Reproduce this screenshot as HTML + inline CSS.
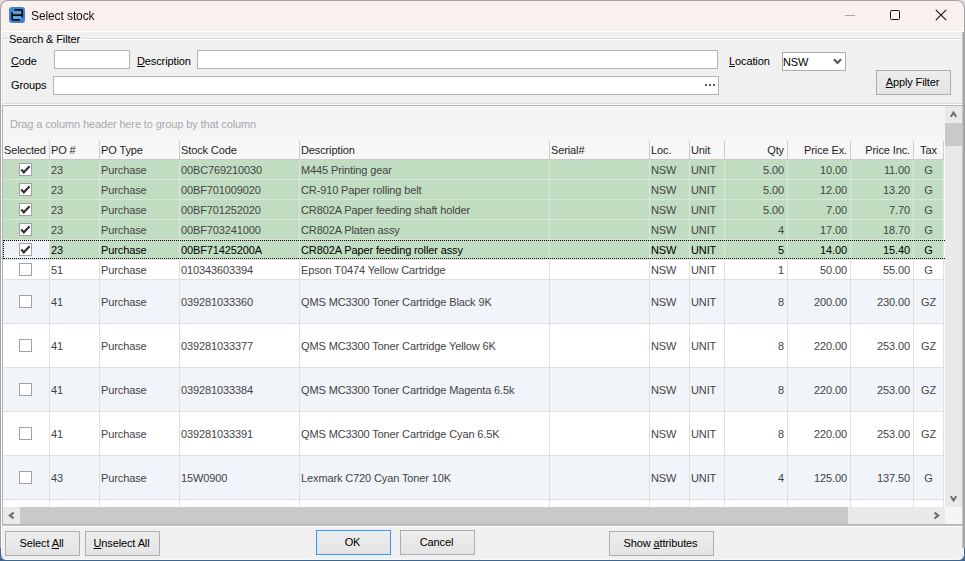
<!DOCTYPE html>
<html><head><meta charset="utf-8"><title>Select stock</title>
<style>
*{box-sizing:border-box;margin:0;padding:0}
html,body{width:965px;height:561px;overflow:hidden}
body{position:relative;background:#d9d9d9;font-family:"Liberation Sans",sans-serif;font-size:11px;letter-spacing:-0.12px;color:#000}
.a{position:absolute}
.t{position:absolute;white-space:nowrap;line-height:14px}
.win{position:absolute;left:0;top:0;width:965px;height:560px;border-radius:8px 8px 7px 7px;background:#f0f0f0;overflow:hidden}
.frame{position:absolute;left:0;top:0;width:965px;height:560px;border:1px solid #a3a3a3;border-bottom-color:#f7f7f7;border-radius:8px 8px 7px 7px}
.tb{position:absolute;background:#fff;border:1px solid #b4b4b4}
.btn{position:absolute;background:linear-gradient(#ededed,#e4e4e4);padding-right:2px;border:1px solid #adadad;text-align:center;color:#000;font-size:11px;line-height:23px;white-space:nowrap}
u{text-decoration:underline;text-decoration-thickness:1px;text-underline-offset:1px}
.cell{position:absolute;white-space:nowrap;line-height:19px}
</style></head><body>

<div class="a" style="left:0px;top:0px;width:965px;height:548px;background:#dedede"></div>
<div class="a" style="left:0px;top:548px;width:965px;height:13px;background:#3c6894"></div>
<div class="win">
<div class="a" style="left:0px;top:0px;width:965px;height:31px;background:#f9f0ef"></div>
<div class="a" style="left:0px;top:31px;width:965px;height:1px;background:#ffffff"></div>
<svg class="a" style="left:9px;top:7px" width="16" height="16" viewBox="0 0 16 16">
<rect x="0" y="0" width="16" height="16" rx="3" fill="#3e86d0"/>
<rect x="4" y="4.4" width="8.6" height="3" fill="#5aa2e6"/>
<rect x="4" y="9" width="8.6" height="3" fill="#5aa2e6"/>
<path d="M5.4 2.9H12.2Q13.2 2.9 13.2 3.9V10.6M2.2 8.2H14M3.1 5.3V11.8Q3.1 12.8 4.1 12.8H11" stroke="#0d0d0d" stroke-width="1.7" fill="none"/>
</svg>
<div class="t" style="left:31px;top:8px;font-size:12px;line-height:16px;letter-spacing:-0.1px;will-change:transform;color:#111">Select stock</div>
<div class="a" style="left:845px;top:15px;width:10px;height:1px;background:#a8a8a8"></div>
<div class="a" style="left:890px;top:10px;width:10px;height:10px;border:1px solid #111;border-radius:1.5px"></div>
<svg class="a" style="left:935px;top:9px" width="12" height="12" viewBox="0 0 12 12"><path d="M0.8 0.8L11.2 11.2M11.2 0.8L0.8 11.2" stroke="#111" stroke-width="1.1"/></svg>
<div class="a" style="left:1px;top:32px;width:1px;height:526px;background:#ffffff"></div>
<div class="a" style="left:2px;top:38px;width:962px;height:66px;border:1px solid #dcdcdc;border-right:none"></div>
<div class="a" style="left:3px;top:39px;width:960px;height:66px;border:1px solid #ffffff;border-top:none;border-left:none"></div>
<div class="a" style="left:3px;top:39px;width:1px;height:64px;background:#fff"></div>
<div class="a" style="left:3px;top:39px;width:958px;height:1px;background:#fff"></div>
<div class="t" style="left:8px;top:32px;padding:0 1px;background:#f0f0f0">Search &amp; Filter</div>
<div class="t" style="left:11px;top:54px;"><u>C</u>ode</div>
<div class="a" style="left:54px;top:50px;width:76px;height:19px;background:#fff;border:1px solid #b4b4b4"></div>
<div class="t" style="left:137px;top:54px;"><u>D</u>escription</div>
<div class="a" style="left:197px;top:50px;width:521px;height:19px;background:#fff;border:1px solid #b4b4b4"></div>
<div class="t" style="left:11px;top:78px;">Groups</div>
<div class="a" style="left:53px;top:76px;width:666px;height:19px;background:#fff;border:1px solid #b4b4b4"></div>
<div class="a" style="left:705px;top:84px;width:2px;height:2px;background:#555"></div>
<div class="a" style="left:709px;top:84px;width:2px;height:2px;background:#555"></div>
<div class="a" style="left:713px;top:84px;width:2px;height:2px;background:#555"></div>
<div class="t" style="left:729px;top:54px;"><u>L</u>ocation</div>
<div class="a" style="left:782px;top:52px;width:64px;height:19px;background:#fff;border:1px solid #adadad"></div>
<div class="t" style="left:783px;top:55px;">NSW</div>
<svg class="a" style="left:833px;top:58px" width="9" height="7" viewBox="0 0 9 7"><path d="M1 1.2L4.5 5L8 1.2" stroke="#555" stroke-width="2" fill="none"/></svg>
<div class="btn" style="left:876px;top:70px;width:75px;height:25px"><u>A</u>pply Filter</div>
<div class="a" style="left:2px;top:105px;width:961px;height:420px;border:1px solid #b4b4b4;border-right-color:#f0f0f0;background:#fff"></div>
<div class="a" style="left:3px;top:106px;width:942px;height:35px;background:#f5f5f5"></div>
<div class="t" style="left:10px;top:117px;color:#a8a8ac">Drag a column header here to group by that column</div>
<div class="a" style="left:3px;top:141px;width:941px;height:18px;background:#f7f7f7"></div>
<div class="a" style="left:3px;top:159px;width:941px;height:1px;background:#c9c9c9"></div>
<div class="a" style="left:49px;top:141px;width:1px;height:18px;background:#cdcdcd"></div>
<div class="a" style="left:99px;top:141px;width:1px;height:18px;background:#cdcdcd"></div>
<div class="a" style="left:179px;top:141px;width:1px;height:18px;background:#cdcdcd"></div>
<div class="a" style="left:299px;top:141px;width:1px;height:18px;background:#cdcdcd"></div>
<div class="a" style="left:549px;top:141px;width:1px;height:18px;background:#cdcdcd"></div>
<div class="a" style="left:649px;top:141px;width:1px;height:18px;background:#cdcdcd"></div>
<div class="a" style="left:689px;top:141px;width:1px;height:18px;background:#cdcdcd"></div>
<div class="a" style="left:724px;top:141px;width:1px;height:18px;background:#cdcdcd"></div>
<div class="a" style="left:787px;top:141px;width:1px;height:18px;background:#cdcdcd"></div>
<div class="a" style="left:850px;top:141px;width:1px;height:18px;background:#cdcdcd"></div>
<div class="a" style="left:913px;top:141px;width:1px;height:18px;background:#cdcdcd"></div>
<div class="a" style="left:943px;top:141px;width:1px;height:18px;background:#cdcdcd"></div>
<div class="t" style="left:4px;top:143px;color:#1e1e1e">Selected</div>
<div class="t" style="left:51px;top:143px;color:#1e1e1e">PO #</div>
<div class="t" style="left:101px;top:143px;color:#1e1e1e">PO Type</div>
<div class="t" style="left:181px;top:143px;color:#1e1e1e">Stock Code</div>
<div class="t" style="left:301px;top:143px;color:#1e1e1e">Description</div>
<div class="t" style="left:551px;top:143px;color:#1e1e1e">Serial#</div>
<div class="t" style="left:651px;top:143px;color:#1e1e1e">Loc.</div>
<div class="t" style="left:691px;top:143px;color:#1e1e1e">Unit</div>
<div class="t" style="left:725px;top:143px;width:59px;text-align:right;color:#1e1e1e">Qty</div>
<div class="t" style="left:788px;top:143px;width:59px;text-align:right;color:#1e1e1e">Price Ex.</div>
<div class="t" style="left:851px;top:143px;width:59px;text-align:right;color:#1e1e1e">Price Inc.</div>
<div class="t" style="left:914px;top:143px;width:29px;text-align:center;color:#1e1e1e">Tax</div>
<div class="a" style="left:3px;top:160px;width:941px;height:19px;background:#c1ddc1"></div>
<div class="a" style="left:3px;top:179px;width:941px;height:1px;background:#dde3dd"></div>
<div class="a" style="left:49px;top:160px;width:1px;height:20px;background:#dde3dd"></div>
<div class="a" style="left:99px;top:160px;width:1px;height:20px;background:#dde3dd"></div>
<div class="a" style="left:179px;top:160px;width:1px;height:20px;background:#dde3dd"></div>
<div class="a" style="left:299px;top:160px;width:1px;height:20px;background:#dde3dd"></div>
<div class="a" style="left:549px;top:160px;width:1px;height:20px;background:#dde3dd"></div>
<div class="a" style="left:649px;top:160px;width:1px;height:20px;background:#dde3dd"></div>
<div class="a" style="left:689px;top:160px;width:1px;height:20px;background:#dde3dd"></div>
<div class="a" style="left:724px;top:160px;width:1px;height:20px;background:#dde3dd"></div>
<div class="a" style="left:787px;top:160px;width:1px;height:20px;background:#dde3dd"></div>
<div class="a" style="left:850px;top:160px;width:1px;height:20px;background:#dde3dd"></div>
<div class="a" style="left:913px;top:160px;width:1px;height:20px;background:#dde3dd"></div>
<div class="a" style="left:943px;top:160px;width:1px;height:20px;background:#dde3dd"></div>
<div class="a" style="left:19px;top:163px;width:13px;height:13px;background:#fff;border:1px solid #a2a2a2"></div>
<svg class="a" style="left:19px;top:163px" width="13" height="13" viewBox="0 0 13 13"><path d="M2.3 6.6L4.8 9.3L10.6 3.3" stroke="#333" stroke-width="2.2" fill="none"/></svg>
<div class="cell" style="left:51px;top:161px;color:#444">23</div>
<div class="cell" style="left:101px;top:161px;color:#444">Purchase</div>
<div class="cell" style="left:181px;top:161px;color:#444">00BC769210030</div>
<div class="cell" style="left:301px;top:161px;color:#444">M445 Printing gear</div>
<div class="cell" style="left:651px;top:161px;color:#444">NSW</div>
<div class="cell" style="left:691px;top:161px;color:#444">UNIT</div>
<div class="cell" style="left:725px;top:161px;width:59px;text-align:right;color:#444">5.00</div>
<div class="cell" style="left:788px;top:161px;width:59px;text-align:right;color:#444">10.00</div>
<div class="cell" style="left:851px;top:161px;width:59px;text-align:right;color:#444">11.00</div>
<div class="cell" style="left:914px;top:161px;width:29px;text-align:center;color:#444">G</div>
<div class="a" style="left:3px;top:180px;width:941px;height:19px;background:#c1ddc1"></div>
<div class="a" style="left:3px;top:199px;width:941px;height:1px;background:#dde3dd"></div>
<div class="a" style="left:49px;top:180px;width:1px;height:20px;background:#dde3dd"></div>
<div class="a" style="left:99px;top:180px;width:1px;height:20px;background:#dde3dd"></div>
<div class="a" style="left:179px;top:180px;width:1px;height:20px;background:#dde3dd"></div>
<div class="a" style="left:299px;top:180px;width:1px;height:20px;background:#dde3dd"></div>
<div class="a" style="left:549px;top:180px;width:1px;height:20px;background:#dde3dd"></div>
<div class="a" style="left:649px;top:180px;width:1px;height:20px;background:#dde3dd"></div>
<div class="a" style="left:689px;top:180px;width:1px;height:20px;background:#dde3dd"></div>
<div class="a" style="left:724px;top:180px;width:1px;height:20px;background:#dde3dd"></div>
<div class="a" style="left:787px;top:180px;width:1px;height:20px;background:#dde3dd"></div>
<div class="a" style="left:850px;top:180px;width:1px;height:20px;background:#dde3dd"></div>
<div class="a" style="left:913px;top:180px;width:1px;height:20px;background:#dde3dd"></div>
<div class="a" style="left:943px;top:180px;width:1px;height:20px;background:#dde3dd"></div>
<div class="a" style="left:19px;top:183px;width:13px;height:13px;background:#fff;border:1px solid #a2a2a2"></div>
<svg class="a" style="left:19px;top:183px" width="13" height="13" viewBox="0 0 13 13"><path d="M2.3 6.6L4.8 9.3L10.6 3.3" stroke="#333" stroke-width="2.2" fill="none"/></svg>
<div class="cell" style="left:51px;top:181px;color:#444">23</div>
<div class="cell" style="left:101px;top:181px;color:#444">Purchase</div>
<div class="cell" style="left:181px;top:181px;color:#444">00BF701009020</div>
<div class="cell" style="left:301px;top:181px;color:#444">CR-910 Paper rolling belt</div>
<div class="cell" style="left:651px;top:181px;color:#444">NSW</div>
<div class="cell" style="left:691px;top:181px;color:#444">UNIT</div>
<div class="cell" style="left:725px;top:181px;width:59px;text-align:right;color:#444">5.00</div>
<div class="cell" style="left:788px;top:181px;width:59px;text-align:right;color:#444">12.00</div>
<div class="cell" style="left:851px;top:181px;width:59px;text-align:right;color:#444">13.20</div>
<div class="cell" style="left:914px;top:181px;width:29px;text-align:center;color:#444">G</div>
<div class="a" style="left:3px;top:200px;width:941px;height:19px;background:#c1ddc1"></div>
<div class="a" style="left:3px;top:219px;width:941px;height:1px;background:#dde3dd"></div>
<div class="a" style="left:49px;top:200px;width:1px;height:20px;background:#dde3dd"></div>
<div class="a" style="left:99px;top:200px;width:1px;height:20px;background:#dde3dd"></div>
<div class="a" style="left:179px;top:200px;width:1px;height:20px;background:#dde3dd"></div>
<div class="a" style="left:299px;top:200px;width:1px;height:20px;background:#dde3dd"></div>
<div class="a" style="left:549px;top:200px;width:1px;height:20px;background:#dde3dd"></div>
<div class="a" style="left:649px;top:200px;width:1px;height:20px;background:#dde3dd"></div>
<div class="a" style="left:689px;top:200px;width:1px;height:20px;background:#dde3dd"></div>
<div class="a" style="left:724px;top:200px;width:1px;height:20px;background:#dde3dd"></div>
<div class="a" style="left:787px;top:200px;width:1px;height:20px;background:#dde3dd"></div>
<div class="a" style="left:850px;top:200px;width:1px;height:20px;background:#dde3dd"></div>
<div class="a" style="left:913px;top:200px;width:1px;height:20px;background:#dde3dd"></div>
<div class="a" style="left:943px;top:200px;width:1px;height:20px;background:#dde3dd"></div>
<div class="a" style="left:19px;top:203px;width:13px;height:13px;background:#fff;border:1px solid #a2a2a2"></div>
<svg class="a" style="left:19px;top:203px" width="13" height="13" viewBox="0 0 13 13"><path d="M2.3 6.6L4.8 9.3L10.6 3.3" stroke="#333" stroke-width="2.2" fill="none"/></svg>
<div class="cell" style="left:51px;top:201px;color:#444">23</div>
<div class="cell" style="left:101px;top:201px;color:#444">Purchase</div>
<div class="cell" style="left:181px;top:201px;color:#444">00BF701252020</div>
<div class="cell" style="left:301px;top:201px;color:#444">CR802A Paper feeding shaft holder</div>
<div class="cell" style="left:651px;top:201px;color:#444">NSW</div>
<div class="cell" style="left:691px;top:201px;color:#444">UNIT</div>
<div class="cell" style="left:725px;top:201px;width:59px;text-align:right;color:#444">5.00</div>
<div class="cell" style="left:788px;top:201px;width:59px;text-align:right;color:#444">7.00</div>
<div class="cell" style="left:851px;top:201px;width:59px;text-align:right;color:#444">7.70</div>
<div class="cell" style="left:914px;top:201px;width:29px;text-align:center;color:#444">G</div>
<div class="a" style="left:3px;top:220px;width:941px;height:19px;background:#c1ddc1"></div>
<div class="a" style="left:3px;top:239px;width:941px;height:1px;background:#dde3dd"></div>
<div class="a" style="left:49px;top:220px;width:1px;height:20px;background:#dde3dd"></div>
<div class="a" style="left:99px;top:220px;width:1px;height:20px;background:#dde3dd"></div>
<div class="a" style="left:179px;top:220px;width:1px;height:20px;background:#dde3dd"></div>
<div class="a" style="left:299px;top:220px;width:1px;height:20px;background:#dde3dd"></div>
<div class="a" style="left:549px;top:220px;width:1px;height:20px;background:#dde3dd"></div>
<div class="a" style="left:649px;top:220px;width:1px;height:20px;background:#dde3dd"></div>
<div class="a" style="left:689px;top:220px;width:1px;height:20px;background:#dde3dd"></div>
<div class="a" style="left:724px;top:220px;width:1px;height:20px;background:#dde3dd"></div>
<div class="a" style="left:787px;top:220px;width:1px;height:20px;background:#dde3dd"></div>
<div class="a" style="left:850px;top:220px;width:1px;height:20px;background:#dde3dd"></div>
<div class="a" style="left:913px;top:220px;width:1px;height:20px;background:#dde3dd"></div>
<div class="a" style="left:943px;top:220px;width:1px;height:20px;background:#dde3dd"></div>
<div class="a" style="left:19px;top:223px;width:13px;height:13px;background:#fff;border:1px solid #a2a2a2"></div>
<svg class="a" style="left:19px;top:223px" width="13" height="13" viewBox="0 0 13 13"><path d="M2.3 6.6L4.8 9.3L10.6 3.3" stroke="#333" stroke-width="2.2" fill="none"/></svg>
<div class="cell" style="left:51px;top:221px;color:#444">23</div>
<div class="cell" style="left:101px;top:221px;color:#444">Purchase</div>
<div class="cell" style="left:181px;top:221px;color:#444">00BF703241000</div>
<div class="cell" style="left:301px;top:221px;color:#444">CR802A Platen assy</div>
<div class="cell" style="left:651px;top:221px;color:#444">NSW</div>
<div class="cell" style="left:691px;top:221px;color:#444">UNIT</div>
<div class="cell" style="left:725px;top:221px;width:59px;text-align:right;color:#444">4</div>
<div class="cell" style="left:788px;top:221px;width:59px;text-align:right;color:#444">17.00</div>
<div class="cell" style="left:851px;top:221px;width:59px;text-align:right;color:#444">18.70</div>
<div class="cell" style="left:914px;top:221px;width:29px;text-align:center;color:#444">G</div>
<div class="a" style="left:3px;top:240px;width:941px;height:19px;background:#c1ddc1"></div>
<div class="a" style="left:3px;top:259px;width:941px;height:1px;background:#dde3dd"></div>
<div class="a" style="left:49px;top:240px;width:1px;height:20px;background:#dde3dd"></div>
<div class="a" style="left:99px;top:240px;width:1px;height:20px;background:#dde3dd"></div>
<div class="a" style="left:179px;top:240px;width:1px;height:20px;background:#dde3dd"></div>
<div class="a" style="left:299px;top:240px;width:1px;height:20px;background:#dde3dd"></div>
<div class="a" style="left:549px;top:240px;width:1px;height:20px;background:#dde3dd"></div>
<div class="a" style="left:649px;top:240px;width:1px;height:20px;background:#dde3dd"></div>
<div class="a" style="left:689px;top:240px;width:1px;height:20px;background:#dde3dd"></div>
<div class="a" style="left:724px;top:240px;width:1px;height:20px;background:#dde3dd"></div>
<div class="a" style="left:787px;top:240px;width:1px;height:20px;background:#dde3dd"></div>
<div class="a" style="left:850px;top:240px;width:1px;height:20px;background:#dde3dd"></div>
<div class="a" style="left:913px;top:240px;width:1px;height:20px;background:#dde3dd"></div>
<div class="a" style="left:943px;top:240px;width:1px;height:20px;background:#dde3dd"></div>
<div class="a" style="left:3px;top:240px;width:46px;height:19px;background:#eef3f9"></div>
<div class="a" style="left:19px;top:243px;width:13px;height:13px;background:#fff;border:1px solid #a2a2a2"></div>
<svg class="a" style="left:19px;top:243px" width="13" height="13" viewBox="0 0 13 13"><path d="M2.3 6.6L4.8 9.3L10.6 3.3" stroke="#333" stroke-width="2.2" fill="none"/></svg>
<div class="cell" style="left:51px;top:241px;color:#000">23</div>
<div class="cell" style="left:101px;top:241px;color:#000">Purchase</div>
<div class="cell" style="left:181px;top:241px;color:#000">00BF71425200A</div>
<div class="cell" style="left:301px;top:241px;color:#000">CR802A Paper feeding roller assy</div>
<div class="cell" style="left:651px;top:241px;color:#000">NSW</div>
<div class="cell" style="left:691px;top:241px;color:#000">UNIT</div>
<div class="cell" style="left:725px;top:241px;width:59px;text-align:right;color:#000">5</div>
<div class="cell" style="left:788px;top:241px;width:59px;text-align:right;color:#000">14.00</div>
<div class="cell" style="left:851px;top:241px;width:59px;text-align:right;color:#000">15.40</div>
<div class="cell" style="left:914px;top:241px;width:29px;text-align:center;color:#000">G</div>
<div class="a" style="left:3px;top:260px;width:941px;height:19px;background:#ffffff"></div>
<div class="a" style="left:3px;top:279px;width:941px;height:1px;background:#e0e0e0"></div>
<div class="a" style="left:49px;top:260px;width:1px;height:20px;background:#e0e0e0"></div>
<div class="a" style="left:99px;top:260px;width:1px;height:20px;background:#e0e0e0"></div>
<div class="a" style="left:179px;top:260px;width:1px;height:20px;background:#e0e0e0"></div>
<div class="a" style="left:299px;top:260px;width:1px;height:20px;background:#e0e0e0"></div>
<div class="a" style="left:549px;top:260px;width:1px;height:20px;background:#e0e0e0"></div>
<div class="a" style="left:649px;top:260px;width:1px;height:20px;background:#e0e0e0"></div>
<div class="a" style="left:689px;top:260px;width:1px;height:20px;background:#e0e0e0"></div>
<div class="a" style="left:724px;top:260px;width:1px;height:20px;background:#e0e0e0"></div>
<div class="a" style="left:787px;top:260px;width:1px;height:20px;background:#e0e0e0"></div>
<div class="a" style="left:850px;top:260px;width:1px;height:20px;background:#e0e0e0"></div>
<div class="a" style="left:913px;top:260px;width:1px;height:20px;background:#e0e0e0"></div>
<div class="a" style="left:943px;top:260px;width:1px;height:20px;background:#e0e0e0"></div>
<div class="a" style="left:19px;top:263px;width:13px;height:13px;background:#fff;border:1px solid #a2a2a2"></div>
<div class="cell" style="left:51px;top:261px;color:#444">51</div>
<div class="cell" style="left:101px;top:261px;color:#444">Purchase</div>
<div class="cell" style="left:181px;top:261px;color:#444">010343603394</div>
<div class="cell" style="left:301px;top:261px;color:#444">Epson T0474 Yellow Cartridge</div>
<div class="cell" style="left:651px;top:261px;color:#444">NSW</div>
<div class="cell" style="left:691px;top:261px;color:#444">UNIT</div>
<div class="cell" style="left:725px;top:261px;width:59px;text-align:right;color:#444">1</div>
<div class="cell" style="left:788px;top:261px;width:59px;text-align:right;color:#444">50.00</div>
<div class="cell" style="left:851px;top:261px;width:59px;text-align:right;color:#444">55.00</div>
<div class="cell" style="left:914px;top:261px;width:29px;text-align:center;color:#444">G</div>
<div class="a" style="left:3px;top:280px;width:941px;height:43px;background:#f1f4f9"></div>
<div class="a" style="left:3px;top:323px;width:941px;height:1px;background:#e0e0e0"></div>
<div class="a" style="left:49px;top:280px;width:1px;height:44px;background:#e0e0e0"></div>
<div class="a" style="left:99px;top:280px;width:1px;height:44px;background:#e0e0e0"></div>
<div class="a" style="left:179px;top:280px;width:1px;height:44px;background:#e0e0e0"></div>
<div class="a" style="left:299px;top:280px;width:1px;height:44px;background:#e0e0e0"></div>
<div class="a" style="left:549px;top:280px;width:1px;height:44px;background:#e0e0e0"></div>
<div class="a" style="left:649px;top:280px;width:1px;height:44px;background:#e0e0e0"></div>
<div class="a" style="left:689px;top:280px;width:1px;height:44px;background:#e0e0e0"></div>
<div class="a" style="left:724px;top:280px;width:1px;height:44px;background:#e0e0e0"></div>
<div class="a" style="left:787px;top:280px;width:1px;height:44px;background:#e0e0e0"></div>
<div class="a" style="left:850px;top:280px;width:1px;height:44px;background:#e0e0e0"></div>
<div class="a" style="left:913px;top:280px;width:1px;height:44px;background:#e0e0e0"></div>
<div class="a" style="left:943px;top:280px;width:1px;height:44px;background:#e0e0e0"></div>
<div class="a" style="left:19px;top:295px;width:13px;height:13px;background:#fff;border:1px solid #a2a2a2"></div>
<div class="cell" style="left:51px;top:293px;color:#444">41</div>
<div class="cell" style="left:101px;top:293px;color:#444">Purchase</div>
<div class="cell" style="left:181px;top:293px;color:#444">039281033360</div>
<div class="cell" style="left:301px;top:293px;color:#444">QMS MC3300 Toner Cartridge Black 9K</div>
<div class="cell" style="left:651px;top:293px;color:#444">NSW</div>
<div class="cell" style="left:691px;top:293px;color:#444">UNIT</div>
<div class="cell" style="left:725px;top:293px;width:59px;text-align:right;color:#444">8</div>
<div class="cell" style="left:788px;top:293px;width:59px;text-align:right;color:#444">200.00</div>
<div class="cell" style="left:851px;top:293px;width:59px;text-align:right;color:#444">230.00</div>
<div class="cell" style="left:914px;top:293px;width:29px;text-align:center;color:#444">GZ</div>
<div class="a" style="left:3px;top:324px;width:941px;height:43px;background:#ffffff"></div>
<div class="a" style="left:3px;top:367px;width:941px;height:1px;background:#e0e0e0"></div>
<div class="a" style="left:49px;top:324px;width:1px;height:44px;background:#e0e0e0"></div>
<div class="a" style="left:99px;top:324px;width:1px;height:44px;background:#e0e0e0"></div>
<div class="a" style="left:179px;top:324px;width:1px;height:44px;background:#e0e0e0"></div>
<div class="a" style="left:299px;top:324px;width:1px;height:44px;background:#e0e0e0"></div>
<div class="a" style="left:549px;top:324px;width:1px;height:44px;background:#e0e0e0"></div>
<div class="a" style="left:649px;top:324px;width:1px;height:44px;background:#e0e0e0"></div>
<div class="a" style="left:689px;top:324px;width:1px;height:44px;background:#e0e0e0"></div>
<div class="a" style="left:724px;top:324px;width:1px;height:44px;background:#e0e0e0"></div>
<div class="a" style="left:787px;top:324px;width:1px;height:44px;background:#e0e0e0"></div>
<div class="a" style="left:850px;top:324px;width:1px;height:44px;background:#e0e0e0"></div>
<div class="a" style="left:913px;top:324px;width:1px;height:44px;background:#e0e0e0"></div>
<div class="a" style="left:943px;top:324px;width:1px;height:44px;background:#e0e0e0"></div>
<div class="a" style="left:19px;top:339px;width:13px;height:13px;background:#fff;border:1px solid #a2a2a2"></div>
<div class="cell" style="left:51px;top:337px;color:#444">41</div>
<div class="cell" style="left:101px;top:337px;color:#444">Purchase</div>
<div class="cell" style="left:181px;top:337px;color:#444">039281033377</div>
<div class="cell" style="left:301px;top:337px;color:#444">QMS MC3300 Toner Cartridge Yellow 6K</div>
<div class="cell" style="left:651px;top:337px;color:#444">NSW</div>
<div class="cell" style="left:691px;top:337px;color:#444">UNIT</div>
<div class="cell" style="left:725px;top:337px;width:59px;text-align:right;color:#444">8</div>
<div class="cell" style="left:788px;top:337px;width:59px;text-align:right;color:#444">220.00</div>
<div class="cell" style="left:851px;top:337px;width:59px;text-align:right;color:#444">253.00</div>
<div class="cell" style="left:914px;top:337px;width:29px;text-align:center;color:#444">GZ</div>
<div class="a" style="left:3px;top:368px;width:941px;height:43px;background:#f1f4f9"></div>
<div class="a" style="left:3px;top:411px;width:941px;height:1px;background:#e0e0e0"></div>
<div class="a" style="left:49px;top:368px;width:1px;height:44px;background:#e0e0e0"></div>
<div class="a" style="left:99px;top:368px;width:1px;height:44px;background:#e0e0e0"></div>
<div class="a" style="left:179px;top:368px;width:1px;height:44px;background:#e0e0e0"></div>
<div class="a" style="left:299px;top:368px;width:1px;height:44px;background:#e0e0e0"></div>
<div class="a" style="left:549px;top:368px;width:1px;height:44px;background:#e0e0e0"></div>
<div class="a" style="left:649px;top:368px;width:1px;height:44px;background:#e0e0e0"></div>
<div class="a" style="left:689px;top:368px;width:1px;height:44px;background:#e0e0e0"></div>
<div class="a" style="left:724px;top:368px;width:1px;height:44px;background:#e0e0e0"></div>
<div class="a" style="left:787px;top:368px;width:1px;height:44px;background:#e0e0e0"></div>
<div class="a" style="left:850px;top:368px;width:1px;height:44px;background:#e0e0e0"></div>
<div class="a" style="left:913px;top:368px;width:1px;height:44px;background:#e0e0e0"></div>
<div class="a" style="left:943px;top:368px;width:1px;height:44px;background:#e0e0e0"></div>
<div class="a" style="left:19px;top:383px;width:13px;height:13px;background:#fff;border:1px solid #a2a2a2"></div>
<div class="cell" style="left:51px;top:381px;color:#444">41</div>
<div class="cell" style="left:101px;top:381px;color:#444">Purchase</div>
<div class="cell" style="left:181px;top:381px;color:#444">039281033384</div>
<div class="cell" style="left:301px;top:381px;color:#444">QMS MC3300 Toner Cartridge Magenta 6.5k</div>
<div class="cell" style="left:651px;top:381px;color:#444">NSW</div>
<div class="cell" style="left:691px;top:381px;color:#444">UNIT</div>
<div class="cell" style="left:725px;top:381px;width:59px;text-align:right;color:#444">8</div>
<div class="cell" style="left:788px;top:381px;width:59px;text-align:right;color:#444">220.00</div>
<div class="cell" style="left:851px;top:381px;width:59px;text-align:right;color:#444">253.00</div>
<div class="cell" style="left:914px;top:381px;width:29px;text-align:center;color:#444">GZ</div>
<div class="a" style="left:3px;top:412px;width:941px;height:43px;background:#ffffff"></div>
<div class="a" style="left:3px;top:455px;width:941px;height:1px;background:#e0e0e0"></div>
<div class="a" style="left:49px;top:412px;width:1px;height:44px;background:#e0e0e0"></div>
<div class="a" style="left:99px;top:412px;width:1px;height:44px;background:#e0e0e0"></div>
<div class="a" style="left:179px;top:412px;width:1px;height:44px;background:#e0e0e0"></div>
<div class="a" style="left:299px;top:412px;width:1px;height:44px;background:#e0e0e0"></div>
<div class="a" style="left:549px;top:412px;width:1px;height:44px;background:#e0e0e0"></div>
<div class="a" style="left:649px;top:412px;width:1px;height:44px;background:#e0e0e0"></div>
<div class="a" style="left:689px;top:412px;width:1px;height:44px;background:#e0e0e0"></div>
<div class="a" style="left:724px;top:412px;width:1px;height:44px;background:#e0e0e0"></div>
<div class="a" style="left:787px;top:412px;width:1px;height:44px;background:#e0e0e0"></div>
<div class="a" style="left:850px;top:412px;width:1px;height:44px;background:#e0e0e0"></div>
<div class="a" style="left:913px;top:412px;width:1px;height:44px;background:#e0e0e0"></div>
<div class="a" style="left:943px;top:412px;width:1px;height:44px;background:#e0e0e0"></div>
<div class="a" style="left:19px;top:427px;width:13px;height:13px;background:#fff;border:1px solid #a2a2a2"></div>
<div class="cell" style="left:51px;top:425px;color:#444">41</div>
<div class="cell" style="left:101px;top:425px;color:#444">Purchase</div>
<div class="cell" style="left:181px;top:425px;color:#444">039281033391</div>
<div class="cell" style="left:301px;top:425px;color:#444">QMS MC3300 Toner Cartridge Cyan 6.5K</div>
<div class="cell" style="left:651px;top:425px;color:#444">NSW</div>
<div class="cell" style="left:691px;top:425px;color:#444">UNIT</div>
<div class="cell" style="left:725px;top:425px;width:59px;text-align:right;color:#444">8</div>
<div class="cell" style="left:788px;top:425px;width:59px;text-align:right;color:#444">220.00</div>
<div class="cell" style="left:851px;top:425px;width:59px;text-align:right;color:#444">253.00</div>
<div class="cell" style="left:914px;top:425px;width:29px;text-align:center;color:#444">GZ</div>
<div class="a" style="left:3px;top:456px;width:941px;height:43px;background:#f1f4f9"></div>
<div class="a" style="left:3px;top:499px;width:941px;height:1px;background:#e0e0e0"></div>
<div class="a" style="left:49px;top:456px;width:1px;height:44px;background:#e0e0e0"></div>
<div class="a" style="left:99px;top:456px;width:1px;height:44px;background:#e0e0e0"></div>
<div class="a" style="left:179px;top:456px;width:1px;height:44px;background:#e0e0e0"></div>
<div class="a" style="left:299px;top:456px;width:1px;height:44px;background:#e0e0e0"></div>
<div class="a" style="left:549px;top:456px;width:1px;height:44px;background:#e0e0e0"></div>
<div class="a" style="left:649px;top:456px;width:1px;height:44px;background:#e0e0e0"></div>
<div class="a" style="left:689px;top:456px;width:1px;height:44px;background:#e0e0e0"></div>
<div class="a" style="left:724px;top:456px;width:1px;height:44px;background:#e0e0e0"></div>
<div class="a" style="left:787px;top:456px;width:1px;height:44px;background:#e0e0e0"></div>
<div class="a" style="left:850px;top:456px;width:1px;height:44px;background:#e0e0e0"></div>
<div class="a" style="left:913px;top:456px;width:1px;height:44px;background:#e0e0e0"></div>
<div class="a" style="left:943px;top:456px;width:1px;height:44px;background:#e0e0e0"></div>
<div class="a" style="left:19px;top:471px;width:13px;height:13px;background:#fff;border:1px solid #a2a2a2"></div>
<div class="cell" style="left:51px;top:469px;color:#444">43</div>
<div class="cell" style="left:101px;top:469px;color:#444">Purchase</div>
<div class="cell" style="left:181px;top:469px;color:#444">15W0900</div>
<div class="cell" style="left:301px;top:469px;color:#444">Lexmark C720 Cyan Toner 10K</div>
<div class="cell" style="left:651px;top:469px;color:#444">NSW</div>
<div class="cell" style="left:691px;top:469px;color:#444">UNIT</div>
<div class="cell" style="left:725px;top:469px;width:59px;text-align:right;color:#444">4</div>
<div class="cell" style="left:788px;top:469px;width:59px;text-align:right;color:#444">125.00</div>
<div class="cell" style="left:851px;top:469px;width:59px;text-align:right;color:#444">137.50</div>
<div class="cell" style="left:914px;top:469px;width:29px;text-align:center;color:#444">G</div>
<div class="a" style="left:3px;top:500px;width:941px;height:7px;background:#ffffff"></div>
<div class="a" style="left:49px;top:500px;width:1px;height:7px;background:#e0e0e0"></div>
<div class="a" style="left:99px;top:500px;width:1px;height:7px;background:#e0e0e0"></div>
<div class="a" style="left:179px;top:500px;width:1px;height:7px;background:#e0e0e0"></div>
<div class="a" style="left:299px;top:500px;width:1px;height:7px;background:#e0e0e0"></div>
<div class="a" style="left:549px;top:500px;width:1px;height:7px;background:#e0e0e0"></div>
<div class="a" style="left:649px;top:500px;width:1px;height:7px;background:#e0e0e0"></div>
<div class="a" style="left:689px;top:500px;width:1px;height:7px;background:#e0e0e0"></div>
<div class="a" style="left:724px;top:500px;width:1px;height:7px;background:#e0e0e0"></div>
<div class="a" style="left:787px;top:500px;width:1px;height:7px;background:#e0e0e0"></div>
<div class="a" style="left:850px;top:500px;width:1px;height:7px;background:#e0e0e0"></div>
<div class="a" style="left:913px;top:500px;width:1px;height:7px;background:#e0e0e0"></div>
<div class="a" style="left:943px;top:500px;width:1px;height:7px;background:#e0e0e0"></div>
<div class="a" style="left:3px;top:240px;width:942px;height:19px;border:1px dotted #000;border-right:none"></div>
<div class="a" style="left:945px;top:106px;width:17px;height:401px;background:#e9e9e9"></div>
<div class="a" style="left:945px;top:123px;width:17px;height:23px;background:#c9c9c9"></div>
<svg class="a" style="left:945px;top:106px" width="17" height="17" viewBox="0 0 17 17"><path d="M5.8 10.7L8.5 6.5L11.2 10.7" stroke="#6b6b6b" stroke-width="2" fill="none" stroke-linejoin="miter"/></svg>
<svg class="a" style="left:945px;top:490px" width="17" height="17" viewBox="0 0 17 17"><path d="M5.8 6.3L8.5 10.5L11.2 6.3" stroke="#6b6b6b" stroke-width="2" fill="none" stroke-linejoin="miter"/></svg>
<div class="a" style="left:3px;top:507px;width:942px;height:17px;background:#e9e9e9"></div>
<div class="a" style="left:20px;top:507px;width:828px;height:17px;background:#c9c9c9"></div>
<svg class="a" style="left:3px;top:507px" width="17" height="17" viewBox="0 0 17 17"><path d="M10.6 5.6L6.8 8.5L10.6 11.4" stroke="#6b6b6b" stroke-width="2" fill="none" stroke-linejoin="miter"/></svg>
<svg class="a" style="left:928px;top:507px" width="17" height="17" viewBox="0 0 17 17"><path d="M6.5 5.6L10.3 8.5L6.5 11.4" stroke="#6b6b6b" stroke-width="2" fill="none" stroke-linejoin="miter"/></svg>
<div class="a" style="left:945px;top:507px;width:17px;height:17px;background:#f5f5f5"></div>
<div class="a" style="left:2px;top:525px;width:961px;height:1px;background:#c4c4c4"></div>
<div class="a" style="left:2px;top:526px;width:961px;height:1px;background:#fbfbfb"></div>
<div class="btn" style="left:5px;top:531px;width:75px;height:25px">Select <u>A</u>ll</div>
<div class="btn" style="left:85px;top:531px;width:75px;height:25px"><u>U</u>nselect All</div>
<div class="btn" style="left:316px;top:530px;width:75px;height:25px;border-color:#3797f6">OK</div>
<div class="btn" style="left:400px;top:530px;width:75px;height:25px">Cancel</div>
<div class="btn" style="left:609px;top:531px;width:105px;height:25px">Show <u>a</u>ttributes</div>
</div>
<div class="frame"></div>
<div class="a" style="left:0px;top:548px;width:1px;height:12px;background:#3c6894"></div>
<div class="a" style="left:962px;top:32px;width:1px;height:516px;background:#c4c4c4"></div>
<div class="a" style="left:963px;top:32px;width:1px;height:516px;background:#a8a8a8"></div>
<div class="a" style="left:963px;top:548px;width:1px;height:8px;background:#f4f4f4"></div>
<div class="a" style="left:964px;top:548px;width:1px;height:12px;background:#3c6894"></div>
</body></html>
